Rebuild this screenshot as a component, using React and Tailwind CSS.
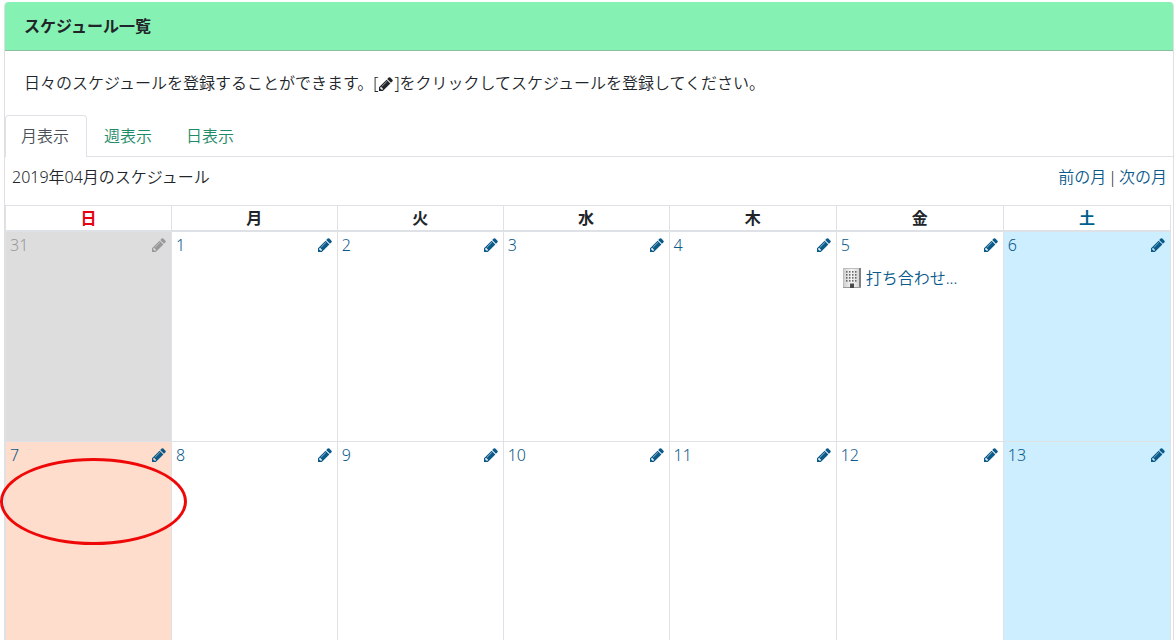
const tabs = ['月表示', '週表示', '日表示']

const weekdays = [
  { label: '日', className: 'w-[14.24%] text-[#e60012]' },
  { label: '月', className: 'w-[14.24%] text-[#212529]' },
  { label: '火', className: 'w-[14.24%] text-[#212529]' },
  { label: '水', className: 'w-[14.24%] text-[#212529]' },
  { label: '木', className: 'text-[#212529]' },
  { label: '金', className: 'text-[#212529]' },
  { label: '土', className: 'text-[#00608d]' },
]

const weeks = [
  [
    { day: 31, tone: 'outside' },
    { day: 1 },
    { day: 2 },
    { day: 3 },
    { day: 4 },
    { day: 5, event: '打ち合わせ...' },
    { day: 6, tone: 'saturday' },
  ],
  [
    { day: 7, tone: 'today', marked: true },
    { day: 8 },
    { day: 9 },
    { day: 10 },
    { day: 11 },
    { day: 12 },
    { day: 13, tone: 'saturday' },
  ],
]

const tones = {
  outside: 'bg-[#dddddd] text-[#999999]',
  saturday: 'bg-[#cceeff] text-[#0b5a8a]',
  today: 'bg-[#ffddcc] text-[#0b5a8a]',
}

function PencilIcon({ className }) {
  return (
    <svg className={`size-[14px] ${className ?? ''}`} viewBox="0 0 1536 1536" fill="currentColor" aria-hidden="true">
      <path d="M363 1408l91-91-235-235-91 91v107h128v128h107zM886 480q0-22-22-22-10 0-17 7l-542 542q-7 7-7 17 0 22 22 22 10 0 17-7l542-542q7-7 7-17zM832 288l416 416-832 832H0v-416zM1515 384q0 53-37 90l-166 166-416-416 166-165q36-38 90-38 53 0 91 38l235 234q37 39 37 91z" />
    </svg>
  )
}

function BuildingIcon() {
  return (
    <svg className="h-5 w-[18px] shrink-0" viewBox="0 0 18 20" aria-hidden="true">
      <defs>
        <linearGradient id="wall" x1="0" x2="1" y1="0" y2="0">
          <stop offset="0" stopColor="#cfcfcf" />
          <stop offset="0.5" stopColor="#f6f6f6" />
          <stop offset="1" stopColor="#d4d4d4" />
        </linearGradient>
      </defs>
      <rect x="0.5" y="0.5" width="16" height="19" fill="url(#wall)" stroke="#bdbdbd" />
      <path d="M16 0h2v20h-2z" fill="#808080" />
      <path d="M0 19h18v1H0z" fill="#9a9a9a" />
      {[3, 6, 9, 12].map((y) =>
        [3, 6, 9, 12].map((x) => (
          <rect key={`${x}-${y}`} x={x} y={y} width="1.5" height="1.7" fill="#6b6b6b" />
        ))
      )}
      <path d="M7 15.5h4V20H7z" fill="#4a4a4a" />
    </svg>
  )
}

function DayCell({ day, tone, event, marked }) {
  return (
    <td
      className={`relative h-[210px] border border-[#dee2e6] p-0 align-top ${tones[tone] ?? 'text-[#0b5a8a]'}`}
    >
      <div className="flex h-[26px] items-center justify-between pr-[5px] pl-1">
        <a href="#day">{day}</a>
        <button type="button" aria-label={`${day}日に登録`} className="cursor-pointer">
          <PencilIcon />
        </button>
      </div>
      {event && (
        <a href="#event" className="mt-2 flex h-6 items-center gap-[5px] pl-[6px]">
          <BuildingIcon />
          <span>{event}</span>
        </a>
      )}
      {marked && (
        <div className="pointer-events-none absolute top-4 -left-[6px] z-10 h-[87px] w-[187px] rounded-[50%] border-3 border-[#ee0808]" />
      )}
    </td>
  )
}

export default function App() {
  return (
    <div className="h-screen overflow-hidden bg-white pt-[2px] pl-1 font-['Noto_Sans','Noto_Sans_CJK_JP',sans-serif] text-base leading-6 font-[350] text-[#212529]">
      <section className="rounded-t border border-[#dfdfdf]">
        <h1 className="-mt-px rounded-t border-b border-[#8cbfa2] bg-[#85f2b3] px-[19px] py-3 font-bold">
          スケジュール一覧
        </h1>

        <p className="px-[19px] py-5">
          日々のスケジュールを登録することができます。[
          <PencilIcon className="mx-px inline align-[-2px]" />
          ]をクリックしてスケジュールを登録してください。
        </p>

        <nav className="flex border-b border-[#dee2e6]">
          {tabs.map((tab, i) => (
            <a
              key={tab}
              href="#view"
              className={
                i === 0
                  ? '-mb-px rounded-t border border-b-0 border-[#dee2e6] bg-white py-2 pr-[17px] pl-[15px] text-[#495057]'
                  : 'border border-b-0 border-transparent px-4 py-2 text-[#1d8a68]'
              }
            >
              {tab}
            </a>
          ))}
        </nav>

        <div className="flex items-center justify-between pt-2 pr-[6px] pb-4 pl-[7px]">
          <h2>2019年04月のスケジュール</h2>
          <div className="flex gap-[2px]">
            <a href="#prev" className="text-[#0b5a8a]">前の月</a>
            <span>|</span>
            <a href="#next" className="text-[#0b5a8a]">次の月</a>
          </div>
        </div>

        <div className="pr-[2px]">
          <table className="w-full table-fixed border-collapse">
            <thead>
              <tr>
                {weekdays.map(({ label, className }) => (
                  <th
                    key={label}
                    scope="col"
                    className={`border border-b-2 border-[#dee2e6] p-0 font-bold ${className}`}
                  >
                    {label}
                  </th>
                ))}
              </tr>
            </thead>
            <tbody>
              {weeks.map((week) => (
                <tr key={week[0].day}>
                  {week.map((cell) => (
                    <DayCell key={cell.day} {...cell} />
                  ))}
                </tr>
              ))}
            </tbody>
          </table>
        </div>
      </section>
    </div>
  )
}
